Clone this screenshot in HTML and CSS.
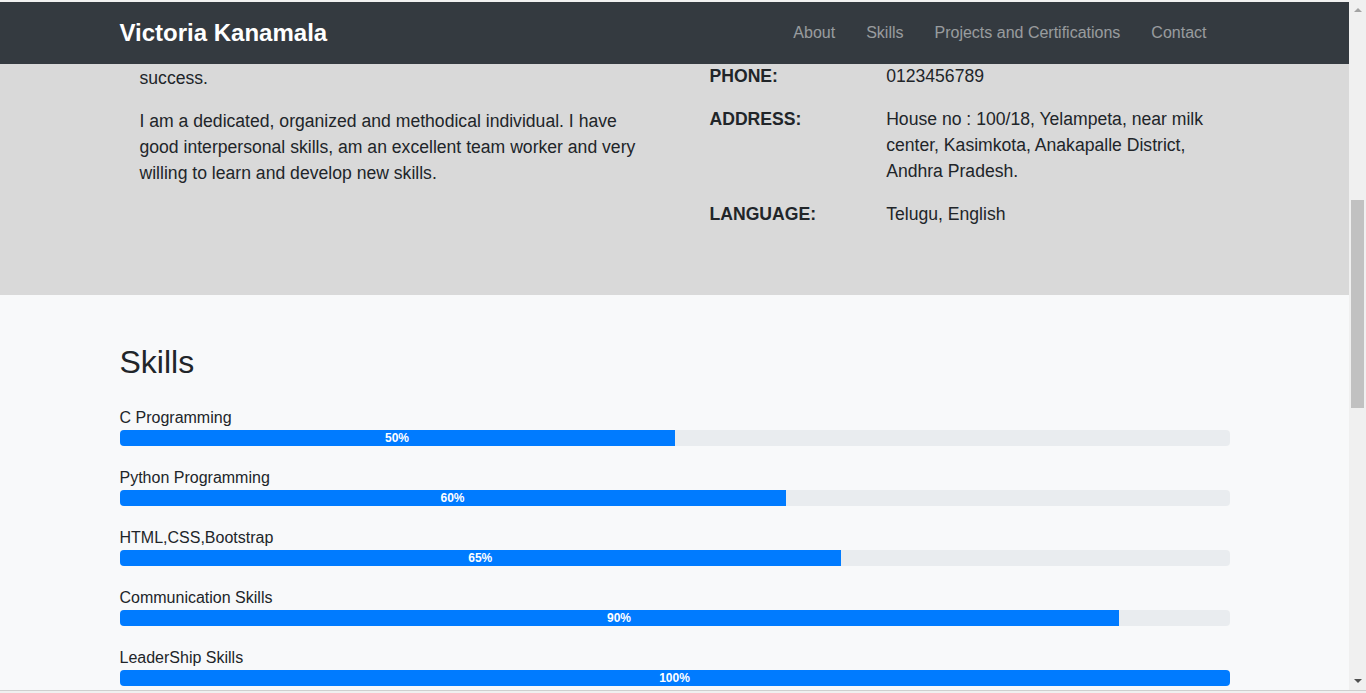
FILE: index.html
```html
<!DOCTYPE html>
<html lang="en">
<head>
<meta charset="utf-8">
<title>Victoria Kanamala</title>
<link rel="stylesheet" href="styles.css">
</head>
<body>
<div class="window">
  <div class="frame">
    <div class="viewport">
      <nav class="navbar">
        <div class="container nav-inner">
          <a class="brand" href="#">Victoria Kanamala</a>
          <ul class="nav-links">
            <li><a href="#about">About</a></li>
            <li><a href="#skills">Skills</a></li>
            <li><a href="#projects">Projects and Certifications</a></li>
            <li><a href="#contact">Contact</a></li>
          </ul>
        </div>
      </nav>
      <section class="about" id="about">
        <div class="container row">
          <div class="col">
            <div class="about-text">
              <p>success.</p>
              <p>I am a dedicated, organized and methodical individual. I have good interpersonal skills, am an excellent team worker and very willing to learn and develop new skills.</p>
            </div>
          </div>
          <div class="col">
            <div class="info">
              <div class="info-row"><span class="label">PHONE:</span><span class="value">0123456789</span></div>
              <div class="info-row"><span class="label">ADDRESS:</span><span class="value">House no : 100/18, Yelampeta, near milk center, Kasimkota, Anakapalle District, Andhra Pradesh.</span></div>
              <div class="info-row"><span class="label">LANGUAGE:</span><span class="value">Telugu, English</span></div>
            </div>
          </div>
        </div>
      </section>
      <section class="skills" id="skills">
        <div class="container">
          <h2>Skills</h2>
          <div class="skill">
            <div class="skill-name">C Programming</div>
            <div class="progress"><div class="progress-bar" style="width:50%">50%</div></div>
          </div>
          <div class="skill">
            <div class="skill-name">Python Programming</div>
            <div class="progress"><div class="progress-bar" style="width:60%">60%</div></div>
          </div>
          <div class="skill">
            <div class="skill-name">HTML,CSS,Bootstrap</div>
            <div class="progress"><div class="progress-bar" style="width:65%">65%</div></div>
          </div>
          <div class="skill">
            <div class="skill-name">Communication Skills</div>
            <div class="progress"><div class="progress-bar" style="width:90%">90%</div></div>
          </div>
          <div class="skill">
            <div class="skill-name">LeaderShip Skills</div>
            <div class="progress"><div class="progress-bar" style="width:100%">100%</div></div>
          </div>
        </div>
      </section>
    </div>
    <div class="scrollbar">
      <div class="arrow arrow-up"></div>
      <div class="track"><div class="thumb"></div></div>
      <div class="arrow arrow-down"></div>
    </div>
  </div>
  <div class="bottom-edge"></div>
</div>
</body>
</html>
```
FILE: styles.css
```css
* { box-sizing: border-box; }
html, body {
  margin: 0;
  padding: 0;
  height: 693px;
  overflow: hidden;
}
body {
  font-family: "Liberation Sans", Arial, sans-serif;
  font-size: 16px;
  line-height: 1.5;
  color: #212529;
  background: #f8f9fa;
}
.window {
  display: flex;
  flex-direction: column;
  height: 693px;
}
.frame {
  display: flex;
  flex: 1;
  min-height: 0;
}
.viewport {
  flex: 1;
  min-width: 0;
  overflow: hidden;
  border-top: 2px solid #f1f1f1;
  background: #f8f9fa;
}
.container {
  max-width: 1140px;
  margin: 0 auto;
  padding: 0 15px;
}
.navbar {
  background: #343a40;
  height: 62px;
}
.nav-inner {
  display: flex;
  align-items: center;
  justify-content: space-between;
  height: 100%;
}
.brand {
  color: #fff;
  font-size: 24px;
  font-weight: bold;
  text-decoration: none;
  line-height: 1.2;
}
.nav-links {
  list-style: none;
  display: flex;
  margin: 0;
  padding: 0;
}
.nav-links li { margin-right: 15px; }
.nav-links a {
  display: block;
  padding: 8px;
  color: rgba(255, 255, 255, 0.5);
  text-decoration: none;
  font-size: 16px;
  line-height: 1.5;
}
.about {
  background: #d9d9d9;
  padding-bottom: 51px;
  font-size: 17.6px;
  line-height: 26px;
}
.row {
  display: flex;
}
.row > .col {
  flex: 0 0 50%;
  padding: 0 15px;
}
.row.container { padding: 0; }
.about-text { padding: 1px 20px 0; }
.about-text p {
  margin: 0 0 17px;
}
.info { padding: 0 20px; margin-top: -1px; }
.info-row {
  display: grid;
  grid-template-columns: 146.67px 1fr;
  column-gap: 30px;
  margin-bottom: 17px;
}
.label { font-weight: bold; }
.skills {
  padding-top: 48px;
}
.skills h2 {
  margin: 0 0 25px;
  font-size: 32px;
  font-weight: 500;
  line-height: 1.2;
}
.skill { margin-bottom: 20px; }
.skill-name {
  font-size: 16px;
  line-height: 24px;
}
.progress {
  display: flex;
  height: 16px;
  background: #e9ecef;
  border-radius: 4px;
  overflow: hidden;
}
.progress-bar {
  display: flex;
  justify-content: center;
  align-items: center;
  background: #007bff;
  color: #fff;
  font-size: 12px;
  font-weight: bold;
  line-height: 16px;
}
.scrollbar {
  width: 17px;
  flex: 0 0 17px;
  background: #f0f0f0;
  display: flex;
  flex-direction: column;
  align-items: center;
}
.arrow {
  width: 0;
  height: 0;
  border-left: 4px solid transparent;
  border-right: 4px solid transparent;
}
.arrow-up {
  margin-top: 8px;
  border-bottom: 4px solid #a3a3a3;
}
.arrow-down {
  margin-bottom: 7px;
  border-top: 4px solid #505050;
}
.track {
  flex: 1;
  width: 100%;
  padding: 0 2px;
  padding-top: 188px;
}
.thumb {
  width: 13px;
  height: 208px;
  background: #c1c1c1;
}
.bottom-edge {
  height: 3px;
  border-top: 1px solid #cfcfcf;
  background: #f0f0f0;
}
```
